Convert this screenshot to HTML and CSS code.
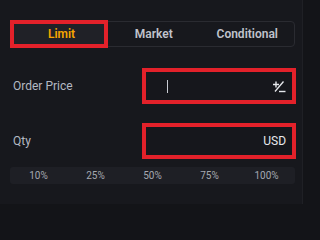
FILE: index.html
```html
<!DOCTYPE html>
<html>
<head>
<meta charset="utf-8">
<link rel="stylesheet" href="styles.css">
</head>
<body>
<div class="panel">
  <div class="tabs">
    <div class="tab active">Limit</div>
    <div class="tab">Market</div>
    <div class="tab">Conditional</div>
  </div>
  <div class="row row-price">
    <span class="label">Order Price</span>
    <div class="field">
      <span class="caret"></span>
      <svg class="pm" width="14" height="13" viewBox="0 0 14 13">
        <path d="M1 4.5h6M4 1.5v6" stroke="#e6e8ec" stroke-width="1.4" fill="none"/>
        <path d="M11.5 1.5L3 11.5" stroke="#e6e8ec" stroke-width="1.3" fill="none"/>
        <path d="M7 11.5h6.5" stroke="#e6e8ec" stroke-width="1.4" fill="none"/>
      </svg>
    </div>
  </div>
  <div class="row row-qty">
    <span class="label">Qty</span>
    <div class="field field-qty">
      <span class="unit">USD</span>
    </div>
  </div>
  <div class="pcts">
    <span>10%</span><span>25%</span><span>50%</span><span>75%</span><span>100%</span>
  </div>
</div>
</body>
</html>
```

FILE: styles.css
```css
html, body {
  margin: 0;
  padding: 0;
  background: #131418;
}
body {
  width: 310px;
  height: 204px;
  overflow: hidden;
  font-family: Roboto, "Liberation Sans", sans-serif;
}
.panel {
  width: 303px;
  height: 204px;
  box-sizing: border-box;
  background: #17181d;
  padding: 21px 7px 0 10px;
  border-right: 1px solid #1f2025;
}
.tabs {
  display: flex;
  gap: 6px;
  height: 26px;
  box-sizing: border-box;
  border: 1px solid #2a2b31;
  border-radius: 4px;
  padding: 2px 3px;
}
.tab {
  flex: 1;
  display: flex;
  align-items: center;
  justify-content: center;
  font-size: 12px;
  font-weight: 600;
  color: #c0c3cc;
}
.tab.active {
  flex: 0 0 90px;
  box-sizing: border-box;
  color: #f7a600;
  background: #202127;
  outline: 4px solid #e3212a;
  padding-left: 5px;
}
.row {
  display: flex;
  align-items: center;
  justify-content: space-between;
  padding: 0 3px;
}
.row-price {
  margin-top: 25px;
}
.row-qty {
  margin-top: 27px;
}
.label {
  font-size: 12px;
  color: #b4b9c3;
}
.field {
  width: 146px;
  height: 28px;
  box-sizing: border-box;
  background: #16171c;
  outline: 4px solid #e3212a;
  display: flex;
  align-items: center;
  justify-content: space-between;
  padding: 0 6px 0 21px;
}
.field-qty {
  justify-content: flex-end;
}
.caret {
  width: 1px;
  height: 13px;
  background: #c9ccd3;
}
.unit {
  font-size: 12px;
  color: #e6e8ec;
}
.pcts {
  margin-top: 12px;
  height: 17px;
  background: #1e1f25;
  border-radius: 3px;
  display: flex;
}
.pcts span {
  flex: 1;
  display: flex;
  align-items: center;
  justify-content: center;
  font-size: 10px;
  color: #a4a8b1;
}
```
